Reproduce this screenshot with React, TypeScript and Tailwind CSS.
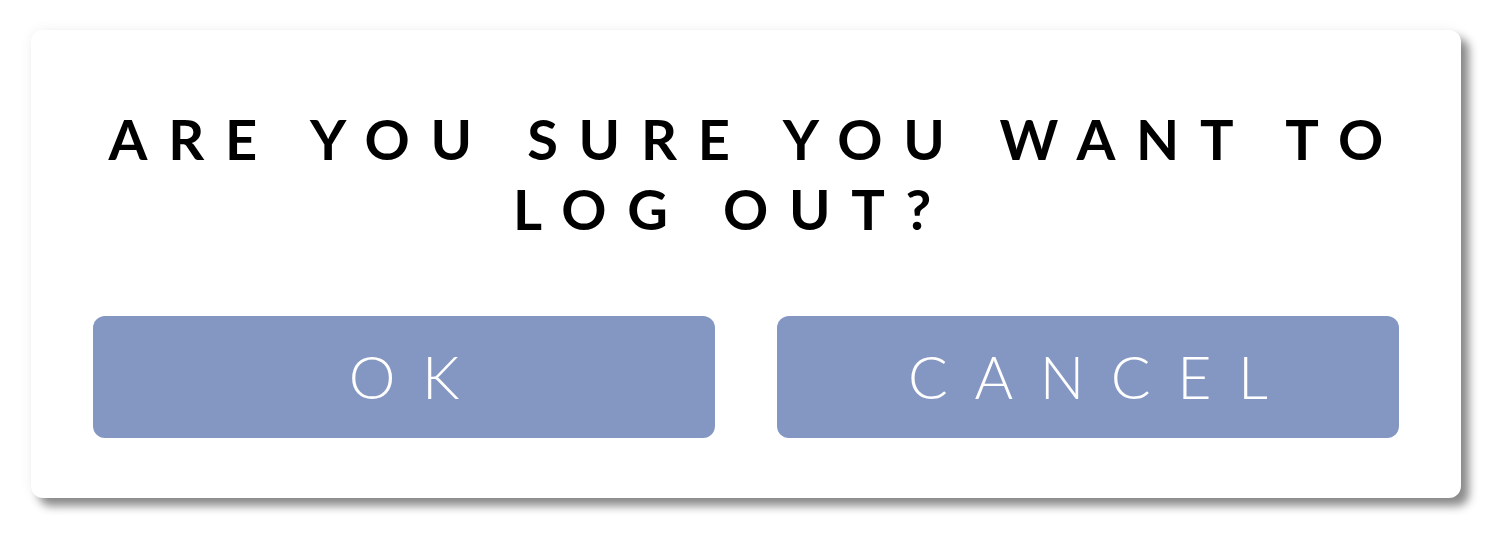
import React from "react";

export default function App() {
  return (
    <div className="w-[1503px] h-[540px] bg-white pt-[30px] pl-[31px]" style={{ fontFamily: "Lato, 'Noto Sans', sans-serif" }}>
      <div className="w-[1430px] h-[468px] bg-white rounded-[12px] shadow-[8px_8px_10px_rgba(0,0,0,0.45),0_0_14px_rgba(0,0,0,0.06)] flex flex-col items-center">
        <h1 className="mt-[74px] text-black font-bold text-[56px] leading-[70px] tracking-[0.37em] text-center w-[1400px]">
          <span className="block pl-[0.37em]">ARE YOU SURE YOU WANT TO</span>
          <span className="block pr-[27px]">LOG OUT?</span>
        </h1>
        <div className="mt-[72px] flex gap-[62px] w-full px-[62px]">
          <button className="flex-1 h-[122px] rounded-[12px] bg-[#8497c2] text-white font-light text-[59px] tracking-[0.45em] pl-[0.45em] flex items-center justify-center">
            OK
          </button>
          <button className="flex-1 h-[122px] rounded-[12px] bg-[#8497c2] text-white font-light text-[59px] tracking-[0.45em] pl-[0.45em] flex items-center justify-center">
            CANCEL
          </button>
        </div>
      </div>
    </div>
  );
}
